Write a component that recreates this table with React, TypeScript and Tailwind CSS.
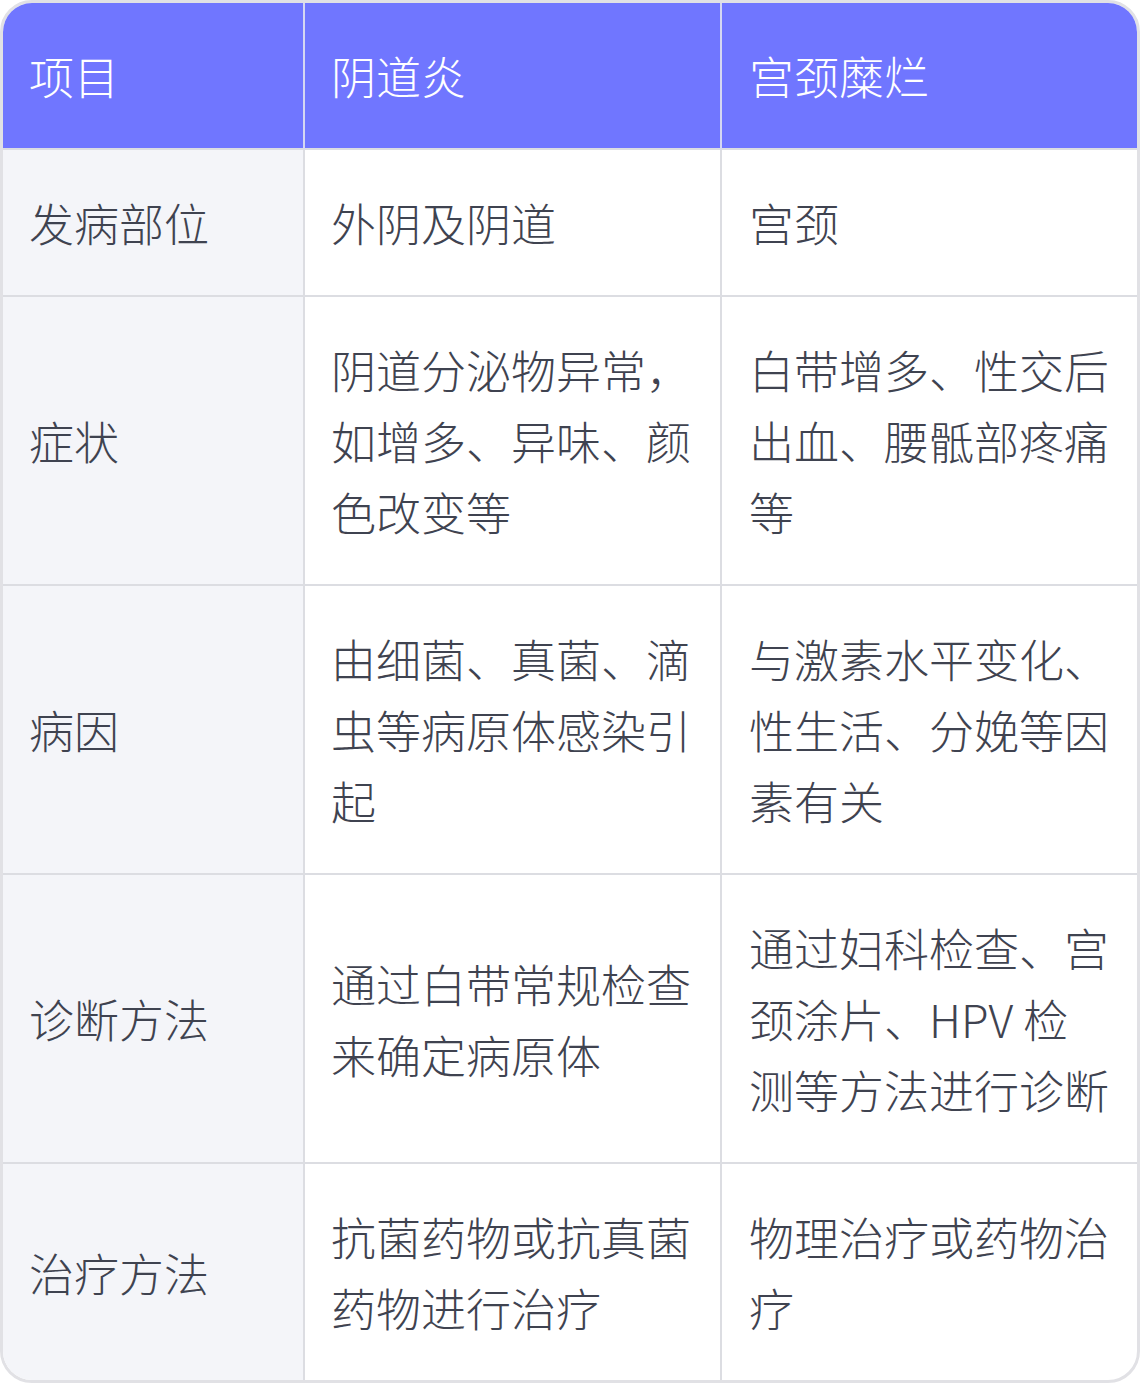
const rows: [string, string, string][] = [
  ["发病部位", "外阴及阴道", "宫颈"],
  ["症状", "阴道分泌物异常，如增多、异味、颜色改变等", "白带增多、性交后出血、腰骶部疼痛等"],
  ["病因", "由细菌、真菌、滴虫等病原体感染引起", "与激素水平变化、性生活、分娩等因素有关"],
  ["诊断方法", "通过白带常规检查来确定病原体", "通过妇科检查、宫颈涂片、HPV 检测等方法进行诊断"],
  ["治疗方法", "抗菌药物或抗真菌药物进行治疗", "物理治疗或药物治疗"],
];

export default function App() {
  return (
    <div
      className="w-[1140px] bg-white text-[45px] leading-[71px] font-light"
      style={{ fontFamily: '"Noto Sans CJK SC", "Noto Sans", sans-serif' }}
    >
      <div className="overflow-hidden rounded-[32px] border-[3px] border-[#e1e1e5]">
        <div className="grid grid-cols-[302px_417px_415px]">
          <div className="border-b-2 border-r-2 border-b-[#dcdde2] border-r-[#d5d7f2] bg-[#7076ff] py-[37px] pl-[26px] pr-4 text-white">
            项目
          </div>
          <div className="border-b-2 border-r-2 border-b-[#dcdde2] border-r-[#d5d7f2] bg-[#7076ff] py-[37px] pl-[26px] pr-5 text-white">
            阴道炎
          </div>
          <div className="border-b-2 border-b-[#dcdde2] bg-[#7076ff] py-[37px] pl-[27px] pr-[27px] text-white">
            宫颈糜烂
          </div>
          {rows.map((r, i) => {
            const last = i === rows.length - 1;
            return (
              <div key={r[0]} className="contents">
                <div
                  className={`flex items-center border-r-2 border-[#dcdde2] bg-[#f4f5f9] py-[37px] pl-[26px] pr-4 text-[#3f4350] ${last ? "" : "border-b-2"}`}
                >
                  {r[0]}
                </div>
                <div
                  className={`flex items-center border-r-2 border-[#dcdde2] py-[37px] pl-[26px] pr-5 text-[#3f4350] ${last ? "" : "border-b-2"}`}
                >
                  <span>{r[1]}</span>
                </div>
                <div
                  className={`flex items-center border-[#dcdde2] py-[37px] pl-[27px] pr-[27px] text-[#3f4350] ${last ? "" : "border-b-2"}`}
                >
                  <span>{r[2]}</span>
                </div>
              </div>
            );
          })}
        </div>
      </div>
    </div>
  );
}
